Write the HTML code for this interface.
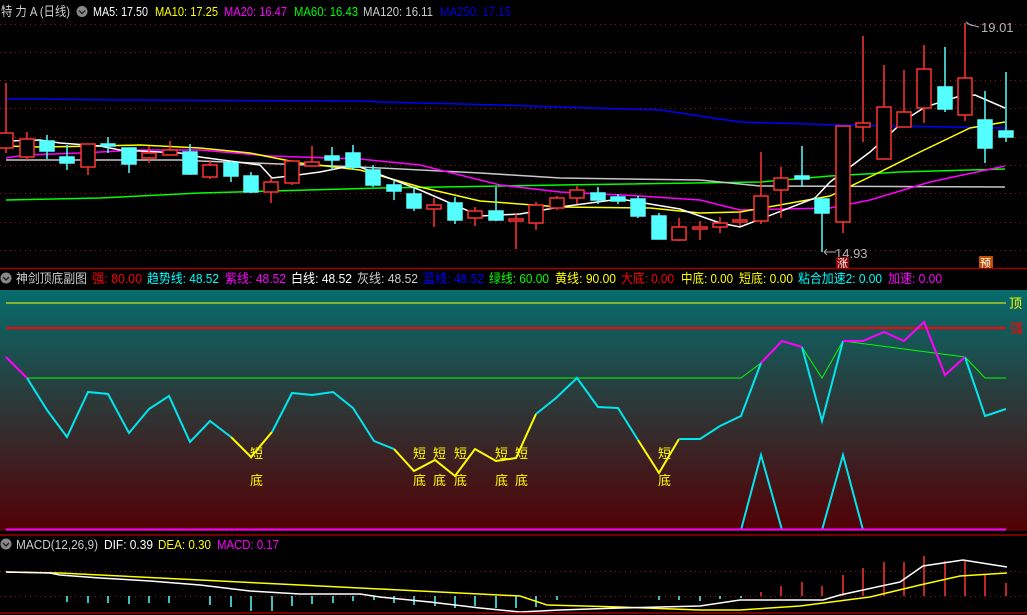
<!DOCTYPE html>
<html><head><meta charset="utf-8"><style>
html,body{margin:0;padding:0;background:#000;width:1027px;height:615px;overflow:hidden}
svg{display:block}
text{font-family:"Liberation Sans","Noto Sans CJK SC",sans-serif;font-size:13px}
</style></head><body>
<svg width="1027" height="615" viewBox="0 0 1027 615" xmlns="http://www.w3.org/2000/svg">
<defs>
<linearGradient id="g" x1="0" y1="0" x2="0" y2="1">
<stop offset="0" stop-color="#066c6c"/><stop offset="0.45" stop-color="#2b3a3a"/><stop offset="1" stop-color="#520004"/>
</linearGradient>
</defs>
<rect width="1027" height="615" fill="#000"/>
<g lengthAdjust="spacingAndGlyphs">
<text x="1" y="16" fill="#d0d0d0" textLength="69" lengthAdjust="spacingAndGlyphs">特 力 A (日线)</text>
<text x="93" y="16" fill="#fff" textLength="55" lengthAdjust="spacingAndGlyphs">MA5: 17.50</text>
<text x="155" y="16" fill="#ff0" textLength="63" lengthAdjust="spacingAndGlyphs">MA10: 17.25</text>
<text x="224" y="16" fill="#f0f" textLength="63" lengthAdjust="spacingAndGlyphs">MA20: 16.47</text>
<text x="294" y="16" fill="#0f0" textLength="64" lengthAdjust="spacingAndGlyphs">MA60: 16.43</text>
<text x="363" y="16" fill="#ccc" textLength="70" lengthAdjust="spacingAndGlyphs">MA120: 16.11</text>
<text x="440" y="16" fill="#0000e0" textLength="71" lengthAdjust="spacingAndGlyphs">MA250: 17.15</text>
</g>
<circle cx="82" cy="11.5" r="5.5" fill="#888"/><path d="M79 10.5 L82 13.5 L85 10.5" stroke="#222" stroke-width="1.4" fill="none"/>
<g stroke="#a01010" stroke-width="1" stroke-dasharray="1,4">
<line x1="0" y1="24.5" x2="1027" y2="24.5"/>
<line x1="0" y1="52.5" x2="1027" y2="52.5"/>
<line x1="0" y1="80.5" x2="1027" y2="80.5"/>
<line x1="0" y1="108.5" x2="1027" y2="108.5"/>
<line x1="0" y1="137.5" x2="1027" y2="137.5"/>
<line x1="0" y1="165.5" x2="1027" y2="165.5"/>
<line x1="0" y1="193.5" x2="1027" y2="193.5"/>
<line x1="0" y1="222.5" x2="1027" y2="222.5"/>
<line x1="0" y1="250.5" x2="1027" y2="250.5"/>
</g>
<g fill="none" stroke-width="1.5">
<polyline stroke="#0000ff" points="6,99 40,99 115,100 360,101 380,102 500,105 560,107 660,110 740,122 840,125 1005,128"/>
<polyline stroke="#00ff00" points="6,200 100,198 200,193 380,188 560,185 760,182 830,176 900,172 1005,169"/>
<polyline stroke="#c8c8c8" points="6,160 180,160 200,161 360,167 480,173 560,178 700,180 760,186 1005,187"/>
<polyline stroke="#ff00ff" points="6,158 25,155 80,153 140,150 200,150 270,156 360,159 420,165 500,185 560,192 640,196 700,200 740,210 830,208 870,200 930,182 1005,166"/>
<polyline stroke="#ffff00" points="6,146 40,147 100,146 140,145 200,148 250,153 300,163 360,170 420,187 480,201 560,207 650,208 700,213 740,212 830,196 880,172 920,152 970,128 1005,122"/>
<polyline stroke="#ffffff" points="6,141 40,140 60,143 100,146 120,150 180,153 200,157 260,165 272,178 290,176 320,172 345,167 360,167 420,190 480,216 520,214 560,207 620,199 680,209 720,223 740,227 815,198 830,182 870,152 905,120 925,107 960,96 975,95 1005,108"/>
</g>
<g stroke-width="1.5">
<g stroke="#ff3232" fill="#000">
<line x1="6" y1="83" x2="6" y2="153"/><rect x="-1" y="133" width="14" height="15"/>
<line x1="27" y1="132" x2="27" y2="160"/><rect x="20" y="139" width="14" height="18"/>
<line x1="88" y1="144" x2="88" y2="175"/><rect x="81" y="144" width="14" height="23"/>
<line x1="149" y1="146" x2="149" y2="163"/><rect x="142" y="153" width="14" height="5"/>
<line x1="170" y1="141" x2="170" y2="155"/><rect x="163" y="150" width="14" height="5"/>
<line x1="210" y1="160" x2="210" y2="179"/><rect x="203" y="165" width="14" height="12"/>
<line x1="271" y1="178" x2="271" y2="203"/><rect x="264" y="182" width="14" height="10"/>
<line x1="292" y1="160" x2="292" y2="185"/><rect x="285" y="161" width="14" height="22"/>
<line x1="312" y1="146" x2="312" y2="166"/><rect x="305" y="162" width="14" height="4"/>
<line x1="434" y1="198" x2="434" y2="227"/><rect x="427" y="205" width="14" height="4"/>
<line x1="475" y1="207" x2="475" y2="226"/><rect x="468" y="211" width="14" height="7"/>
<line x1="516" y1="213" x2="516" y2="249"/><rect x="509" y="219" width="14" height="2"/>
<line x1="536" y1="202" x2="536" y2="230"/><rect x="529" y="205" width="14" height="18"/>
<line x1="557" y1="196" x2="557" y2="210"/><rect x="550" y="198" width="14" height="10"/>
<line x1="577" y1="186" x2="577" y2="204"/><rect x="570" y="190" width="14" height="8"/>
<line x1="679" y1="218" x2="679" y2="241"/><rect x="672" y="227" width="14" height="13"/>
<line x1="700" y1="221" x2="700" y2="240"/><rect x="693" y="227" width="14" height="2"/>
<line x1="720" y1="217" x2="720" y2="233"/><rect x="713" y="223" width="14" height="4"/>
<line x1="740" y1="213" x2="740" y2="226"/><rect x="733" y="220" width="14" height="2"/>
<line x1="761" y1="152" x2="761" y2="224"/><rect x="754" y="196" width="14" height="25"/>
<line x1="781" y1="167" x2="781" y2="218"/><rect x="774" y="178" width="14" height="12"/>
<line x1="843" y1="126" x2="843" y2="233"/><rect x="836" y="126" width="14" height="96"/>
<line x1="863" y1="36" x2="863" y2="142"/><rect x="856" y="123" width="14" height="4"/>
<line x1="884" y1="65" x2="884" y2="159"/><rect x="877" y="107" width="14" height="52"/>
<line x1="904" y1="70" x2="904" y2="127"/><rect x="897" y="112" width="14" height="15"/>
<line x1="924" y1="45" x2="924" y2="123"/><rect x="917" y="69" width="14" height="39"/>
<line x1="965" y1="23" x2="965" y2="121"/><rect x="958" y="78" width="14" height="37"/>
</g>
<g stroke="#54ffff" fill="#54ffff">
<line x1="47" y1="135" x2="47" y2="159"/><rect x="40" y="141" width="14" height="10"/>
<line x1="67" y1="145" x2="67" y2="170"/><rect x="60" y="157" width="14" height="6"/>
<line x1="108" y1="137" x2="108" y2="153"/><rect x="101" y="144" width="14" height="2"/>
<line x1="129" y1="148" x2="129" y2="173"/><rect x="122" y="148" width="14" height="16"/>
<line x1="190" y1="144" x2="190" y2="175"/><rect x="183" y="152" width="14" height="22"/>
<line x1="231" y1="161" x2="231" y2="182"/><rect x="224" y="163" width="14" height="13"/>
<line x1="251" y1="172" x2="251" y2="193"/><rect x="244" y="176" width="14" height="16"/>
<line x1="332" y1="147" x2="332" y2="170"/><rect x="325" y="156" width="14" height="4"/>
<line x1="353" y1="145" x2="353" y2="170"/><rect x="346" y="153" width="14" height="14"/>
<line x1="373" y1="165" x2="373" y2="187"/><rect x="366" y="170" width="14" height="15"/>
<line x1="394" y1="181" x2="394" y2="200"/><rect x="387" y="185" width="14" height="6"/>
<line x1="414" y1="188" x2="414" y2="211"/><rect x="407" y="194" width="14" height="14"/>
<line x1="455" y1="197" x2="455" y2="224"/><rect x="448" y="203" width="14" height="17"/>
<line x1="496" y1="187" x2="496" y2="221"/><rect x="489" y="211" width="14" height="9"/>
<line x1="598" y1="187" x2="598" y2="204"/><rect x="591" y="193" width="14" height="7"/>
<line x1="618" y1="194" x2="618" y2="204"/><rect x="611" y="197" width="14" height="4"/>
<line x1="638" y1="196" x2="638" y2="218"/><rect x="631" y="199" width="14" height="17"/>
<line x1="659" y1="213" x2="659" y2="239"/><rect x="652" y="216" width="14" height="23"/>
<line x1="802" y1="146" x2="802" y2="187"/><rect x="795" y="176" width="14" height="3"/>
<line x1="822" y1="199" x2="822" y2="252"/><rect x="815" y="199" width="14" height="14"/>
<line x1="945" y1="47" x2="945" y2="112"/><rect x="938" y="87" width="14" height="22"/>
<line x1="985" y1="91" x2="985" y2="163"/><rect x="978" y="120" width="14" height="28"/>
<line x1="1006" y1="72" x2="1006" y2="142"/><rect x="999" y="131" width="14" height="6"/>
</g>
</g>
<path d="M966 22 L972 26 M966 22 L968 24 L979 27" stroke="#aaa" fill="none"/>
<text x="981" y="32" fill="#b4b4b4">19.01</text>
<path d="M824 252 L836 252 M824 252 L827 249 M824 252 L827 255" stroke="#aaa" fill="none"/>
<text x="835" y="258" fill="#b4b4b4">14.93</text>
<rect x="836" y="257" width="13" height="11" fill="#8a0000"/><text x="837" y="267" fill="#fff" style="font-size:11px">涨</text>
<rect x="979" y="256" width="14" height="12" fill="#c05000"/><text x="980" y="267" fill="#fff" style="font-size:11px">预</text>
<line x1="0" y1="268.5" x2="1027" y2="268.5" stroke="#a00000" stroke-width="1.5"/>
<circle cx="6" cy="278" r="5.5" fill="#888"/><path d="M3 277 L6 280 L9 277" stroke="#222" stroke-width="1.4" fill="none"/>
<text x="16" y="283" fill="#ccc" textLength="71" lengthAdjust="spacingAndGlyphs">神剑顶底副图</text>
<text x="92" y="283" fill="#f00" textLength="50" lengthAdjust="spacingAndGlyphs">强: 80.00</text>
<text x="147" y="283" fill="#0ff" textLength="72" lengthAdjust="spacingAndGlyphs">趋势线: 48.52</text>
<text x="225" y="283" fill="#f0f" textLength="61" lengthAdjust="spacingAndGlyphs">紫线: 48.52</text>
<text x="291" y="283" fill="#fff" textLength="61" lengthAdjust="spacingAndGlyphs">白线: 48.52</text>
<text x="357" y="283" fill="#ccc" textLength="61" lengthAdjust="spacingAndGlyphs">灰线: 48.52</text>
<text x="423" y="283" fill="#0000ff" textLength="61" lengthAdjust="spacingAndGlyphs">蓝线: 48.52</text>
<text x="489" y="283" fill="#0f0" textLength="60" lengthAdjust="spacingAndGlyphs">绿线: 60.00</text>
<text x="555" y="283" fill="#ff0" textLength="61" lengthAdjust="spacingAndGlyphs">黄线: 90.00</text>
<text x="621" y="283" fill="#f00" textLength="53" lengthAdjust="spacingAndGlyphs">大底: 0.00</text>
<text x="681" y="283" fill="#ff0" textLength="52" lengthAdjust="spacingAndGlyphs">中底: 0.00</text>
<text x="739" y="283" fill="#ff0" textLength="54" lengthAdjust="spacingAndGlyphs">短底: 0.00</text>
<text x="798" y="283" fill="#0ff" textLength="84" lengthAdjust="spacingAndGlyphs">粘合加速2: 0.00</text>
<text x="888" y="283" fill="#f0f" textLength="54" lengthAdjust="spacingAndGlyphs">加速: 0.00</text>
<rect x="0" y="290" width="1027" height="241" fill="url(#g)"/>
<line x1="6" y1="303" x2="1006" y2="303" stroke="#ff0" stroke-width="1"/>
<line x1="6" y1="328" x2="1006" y2="328" stroke="#f00" stroke-width="2"/>
<text x="1009" y="308" fill="#ff0">顶</text>
<text x="1010" y="333" fill="#f00">强</text>
<polyline fill="none" stroke="#0f0" stroke-width="1" points="27,378 741,378 761,363 782,341 802,347 822,378 843,341 965,357 985,378 1006,378"/>
<g fill="none" stroke-width="2">
<polyline stroke="#ff0" points="231,437 251,457 272,432"/>
<polyline stroke="#ff0" points="394,449 414,471 435,460 455,476 475,449 496,461 516,458 536,414"/>
<polyline stroke="#ff0" points="638,440 659,473 679,439"/>
<polyline stroke="#00e5ee" points="27,378 47,410 67,437 88,392 108,394 129,433 149,409 169,396 190,442 210,421 231,437"/>
<polyline stroke="#00e5ee" points="272,432 292,393 312,395 333,392 353,408 374,441 394,449"/>
<polyline stroke="#00e5ee" points="536,414 556,398 577,378 598,407 618,408 638,440"/>
<polyline stroke="#00e5ee" points="679,439 700,439 720,426 741,416 761,363"/>
<polyline stroke="#00e5ee" points="802,347 822,421 843,341"/>
<polyline stroke="#00e5ee" points="965,357 985,416 1006,409"/>
<polyline stroke="#00e5ee" points="741,530 761,455 782,530"/>
<polyline stroke="#00e5ee" points="822,530 843,455 863,530"/>
<polyline stroke="#ff00ff" points="6,357 27,378"/>
<polyline stroke="#ff00ff" points="761,363 782,341 802,347"/>
<polyline stroke="#ff00ff" points="843,341 863,341 884,332 904,341 924,322 945,375 965,357"/>
</g>
<line x1="6" y1="529.5" x2="1006" y2="529.5" stroke="#f0f" stroke-width="2"/>
<g fill="#ff0">
<text x="250" y="458">短</text><text x="250" y="485">底</text>
<text x="413" y="458">短</text><text x="413" y="485">底</text>
<text x="433" y="458">短</text><text x="433" y="485">底</text>
<text x="454" y="458">短</text><text x="454" y="485">底</text>
<text x="495" y="458">短</text><text x="495" y="485">底</text>
<text x="515" y="458">短</text><text x="515" y="485">底</text>
<text x="658" y="458">短</text><text x="658" y="485">底</text>
</g>
<line x1="0" y1="535" x2="1027" y2="535" stroke="#a00000" stroke-width="1.5"/>
<circle cx="6" cy="544" r="5.5" fill="#888"/><path d="M3 543 L6 546 L9 543" stroke="#222" stroke-width="1.4" fill="none"/>
<text x="16" y="549" fill="#ccc" textLength="82" lengthAdjust="spacingAndGlyphs">MACD(12,26,9)</text>
<text x="104" y="549" fill="#fff" textLength="49" lengthAdjust="spacingAndGlyphs">DIF: 0.39</text>
<text x="158" y="549" fill="#ff0" textLength="53" lengthAdjust="spacingAndGlyphs">DEA: 0.30</text>
<text x="217" y="549" fill="#f0f" textLength="62" lengthAdjust="spacingAndGlyphs">MACD: 0.17</text>
<g stroke="#a01010" stroke-dasharray="1,4"><line x1="0" y1="571.5" x2="1027" y2="571.5"/><line x1="0" y1="596.5" x2="1027" y2="596.5"/></g>
<g stroke="#54ffff" stroke-width="1.5">
<line x1="67" y1="596" x2="67" y2="602"/><line x1="88" y1="596" x2="88" y2="603"/><line x1="108" y1="596" x2="108" y2="603"/>
<line x1="129" y1="596" x2="129" y2="604"/><line x1="149" y1="596" x2="149" y2="603"/><line x1="169" y1="596" x2="169" y2="603"/>
<line x1="210" y1="596" x2="210" y2="605"/><line x1="231" y1="596" x2="231" y2="607"/><line x1="251" y1="596" x2="251" y2="611"/>
<line x1="272" y1="596" x2="272" y2="611"/><line x1="292" y1="596" x2="292" y2="606"/><line x1="312" y1="596" x2="312" y2="604"/>
<line x1="333" y1="596" x2="333" y2="603"/><line x1="353" y1="596" x2="353" y2="601"/><line x1="374" y1="596" x2="374" y2="600"/>
<line x1="394" y1="596" x2="394" y2="603"/><line x1="414" y1="596" x2="414" y2="605"/><line x1="435" y1="596" x2="435" y2="606"/>
<line x1="455" y1="596" x2="455" y2="608"/><line x1="475" y1="596" x2="475" y2="606"/><line x1="496" y1="596" x2="496" y2="608"/>
<line x1="516" y1="596" x2="516" y2="608"/><line x1="536" y1="596" x2="536" y2="607"/><line x1="557" y1="596" x2="557" y2="600"/>
<line x1="659" y1="596" x2="659" y2="600"/><line x1="679" y1="596" x2="679" y2="600"/><line x1="700" y1="596" x2="700" y2="601"/>
<line x1="720" y1="596" x2="720" y2="599"/><line x1="741" y1="596" x2="741" y2="598"/>
</g>
<g stroke="#ff3232" stroke-width="1.5">
<line x1="761" y1="596" x2="761" y2="592"/><line x1="781" y1="596" x2="781" y2="586"/><line x1="802" y1="596" x2="802" y2="582"/>
<line x1="822" y1="596" x2="822" y2="586"/><line x1="843" y1="596" x2="843" y2="575"/><line x1="863" y1="596" x2="863" y2="568"/>
<line x1="884" y1="596" x2="884" y2="562"/><line x1="904" y1="596" x2="904" y2="562"/><line x1="924" y1="596" x2="924" y2="556"/>
<line x1="945" y1="596" x2="945" y2="561"/><line x1="965" y1="596" x2="965" y2="560"/><line x1="985" y1="596" x2="985" y2="574"/>
<line x1="1006" y1="596" x2="1006" y2="583"/>
</g>
<g fill="none" stroke-width="1.5">
<polyline stroke="#ff0" points="6,572 60,573 100,575 200,580 300,585 400,590 520,596 547,605 620,607 700,610 740,610 800,606 870,597 920,585 960,576 1007,573"/>
<polyline stroke="#fff" points="6,572 50,573 60,575 100,578 150,581 200,585 250,591 300,594 360,594 380,597 430,602 480,608 520,612 560,610 620,608 700,606 740,600 823,600 840,595 900,582 923,566 963,560 1007,567"/>
</g>
<line x1="0" y1="613" x2="1027" y2="613" stroke="#a00000" stroke-width="1.5"/>
</svg>
</body></html>
